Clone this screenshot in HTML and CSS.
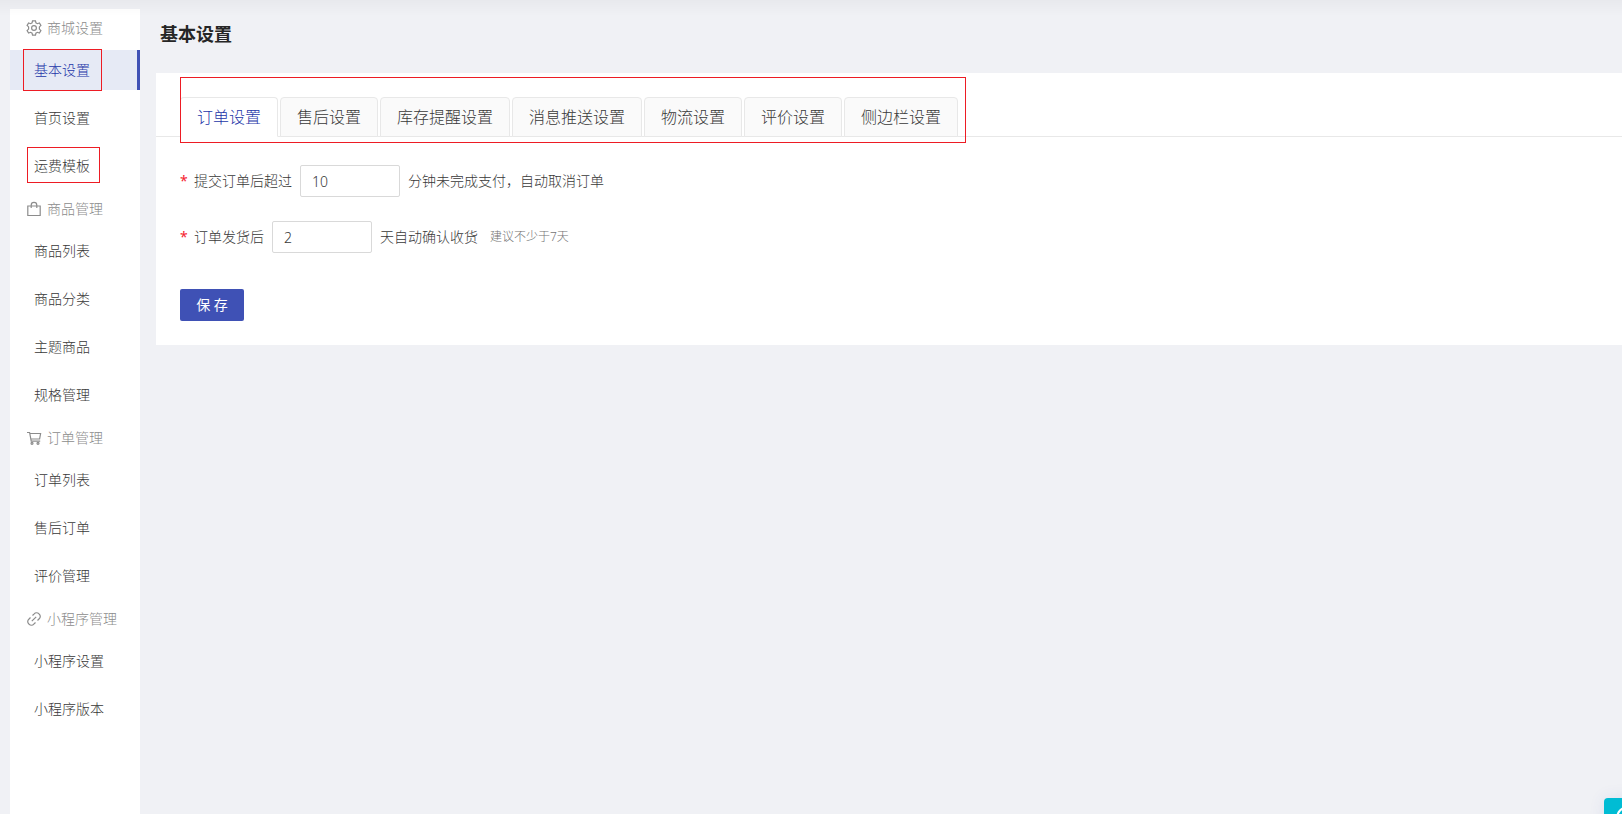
FILE: index.html
```html
<!DOCTYPE html>
<html lang="zh-CN">
<head>
    <meta charset="UTF-8" />
    <title>基本设置</title>
    <link rel="stylesheet" href="styles.css">
</head>
<body>
    <div class="layout">
        <!--左侧菜单-->
        <nav class="sider">
            <h3>
                <svg viewBox="0 0 16 16"><path d="M6.500 .8h3l.4 2 1.500.9 2-.7 1.500 2.500-1.500 1.400v2.200l1.500 1.400-1.500 2.500-2-.7-1.500.9-.4 2h-3l-.4-2-1.500-.9-2 .7-1.500-2.500 1.500-1.400V6.900L1.100 5.500 2.600 3l2 .7 1.500-.9z"/><circle cx="8" cy="8" r="2.400"/></svg>
                商城设置
            </h3>
            <ul>
                <li class="on"><a href="#"><span class="mark mark-basic">基本设置</span></a></li>
                <li><a href="#">首页设置</a></li>
                <li><a href="#"><span class="mark mark-freight">运费模板</span></a></li>
            </ul>
            <h3>
                <svg viewBox="0 0 16 16"><path d="M1.800 5h12.400v9.500H1.800zM5.200 7V4.200a2.800 2.800 0 0 1 5.600 0V7"/></svg>
                商品管理
            </h3>
            <ul>
                <li><a href="#">商品列表</a></li>
                <li><a href="#">商品分类</a></li>
                <li><a href="#">主题商品</a></li>
                <li><a href="#">规格管理</a></li>
            </ul>
            <h3>
                <svg viewBox="0 0 16 16"><path d="M1 2.500h2.600l1.600 8.700h9M4 3.500h10.600l-1 5.500H5"/><circle cx="6" cy="13.300" r="1"/><circle cx="12" cy="13.300" r="1"/></svg>
                订单管理
            </h3>
            <ul>
                <li><a href="#">订单列表</a></li>
                <li><a href="#">售后订单</a></li>
                <li><a href="#">评价管理</a></li>
            </ul>
            <h3>
                <svg viewBox="0 0 16 16"><path d="M6.500 4.500l1.700-1.700a3.100 3.100 0 0 1 4.600-.1l.5.5a3.100 3.100 0 0 1-.1 4.600l-1.700 1.700M9.500 11.500l-1.700 1.700a3.100 3.100 0 0 1-4.600.1l-.5-.5a3.100 3.100 0 0 1 .1-4.600l1.700-1.700M5.800 10.200l4.400-4.400"/></svg>
                小程序管理
            </h3>
            <ul>
                <li><a href="#">小程序设置</a></li>
                <li><a href="#">小程序版本</a></li>
            </ul>
        </nav>

        <!--右侧内容-->
        <main class="content">
            <h1>基本设置</h1>
            <div class="panel">
                <div class="tabs">
                    <button type="button" class="on">订单设置</button>
                    <button type="button">售后设置</button>
                    <button type="button">库存提醒设置</button>
                    <button type="button">消息推送设置</button>
                    <button type="button">物流设置</button>
                    <button type="button">评价设置</button>
                    <button type="button">侧边栏设置</button>
                    <span class="tabs-mark"></span>
                </div>
                <form>
                    <div class="row">
                        <label for="cancel">提交订单后超过</label>
                        <input type="text" id="cancel" value="10">
                        <span>分钟未完成支付，自动取消订单</span>
                    </div>
                    <div class="row">
                        <label for="confirm">订单发货后</label>
                        <input type="text" id="confirm" value="2">
                        <span>天自动确认收货</span>
                        <span class="tip">建议不少于7天</span>
                    </div>
                    <button type="button" class="save">保 存</button>
                </form>
            </div>
        </main>
    </div>
    <button type="button" class="service" aria-label="客服">
        <svg viewBox="0 0 24 24"><circle cx="12" cy="12" r="11"/></svg>
    </button>
</body>
</html>
```

FILE: styles.css
```css
*{
    margin: 0;
    padding: 0;
    box-sizing: border-box;
}
body{
    background-color: #f0f1f5;
    color: #383838;
    font: 300 14px/20px "Noto Sans", "Noto Sans CJK SC", sans-serif;
    overflow: hidden;
}
/*顶部阴影*/
body::before{
    content: "";
    position: fixed;
    z-index: 1;
    top: 0;
    left: 0;
    right: 0;
    height: 16px;
    background: linear-gradient(rgba(0,0,0,.03), rgba(0,0,0,0));
    pointer-events: none;
}
ul{
    list-style: none;
}
a{
    color: inherit;
    text-decoration: none;
}
input, button{
    font: inherit;
    color: inherit;
}
svg{
    fill: none;
    stroke: currentColor;
}
.layout{
    display: flex;
    gap: 16px;
    min-height: 100vh;
    padding: 9px 0 0 10px;
}

/*菜单*/
.sider{
    width: 130px;
    flex-shrink: 0;
    background-color: #fff;
}
.sider h3{
    display: flex;
    align-items: center;
    gap: 5px;
    height: 37px;
    padding-left: 16px;
    color: #8c8c8c;
    font-size: 14px;
    font-weight: 300;
}
.sider h3 svg{
    width: 16px;
    height: 16px;
    color: #8c8c8c;
    stroke-width: 1.2;
}
.sider ul{
    display: flex;
    flex-direction: column;
    gap: 8px;
    padding: 4px 0;
}
.sider li{
    height: 40px;
    padding-left: 24px;
    line-height: 40px;
}
.sider li a{
    display: block;
}
.sider .on{
    color: #2436a8;
    background-color: #e6eaf5;
    border-right: 3px solid #3f51b5;
}
/*红色标注框*/
.mark{
    position: relative;
}
.mark::after{
    content: "";
    position: absolute;
    border: 1px solid #ed1c24;
}
.mark-basic::after{
    inset: -11px -12px -12px -11px;
}
.mark-freight::after{
    inset: -9px -10px -8px -7px;
}

/*内容*/
.content{
    flex: 1;
}
h1{
    height: 64px;
    padding-left: 4px;
    color: #262626;
    font-size: 18px;
    line-height: 50px;
}
.panel{
    padding: 24px 0;
    background-color: #fff;
}
.tabs{
    position: relative;
    display: flex;
    gap: 2px;
    padding-left: 24px;
    border-bottom: 1px solid #e8e8e8;
}
.tabs button{
    height: 40px;
    margin-bottom: -1px;
    padding: 0 16px;
    border: 1px solid #e8e8e8;
    border-radius: 4px 4px 0 0;
    background-color: #fafafa;
    font-size: 16px;
}
.tabs .on{
    color: #2436a8;
    background-color: #fff;
    border-bottom-color: #fff;
}
.tabs-mark{
    position: absolute;
    top: -20px;
    left: 24px;
    width: 786px;
    height: 66px;
    border: 1px solid #ed1c24;
}
form{
    padding: 28px 24px 0;
}
.row{
    display: flex;
    align-items: center;
    gap: 8px;
    margin-bottom: 24px;
}
.row label::before{
    content: "*";
    display: inline-block;
    width: 14px;
    color: #f5222d;
    font-weight: 400;
}
.row input{
    width: 100px;
    height: 32px;
    padding: 0 11px;
    border: 1px solid #d9d9d9;
    border-radius: 2px;
}
.row .tip{
    margin-left: 4px;
    color: #737373;
    font-size: 12px;
}
.save{
    width: 64px;
    height: 32px;
    margin-top: 12px;
    border: 0;
    border-radius: 2px;
    background-color: #3f51b5;
    color: #fff;
    font-weight: 400;
}

/*右下角客服*/
.service{
    display: flex;
    justify-content: center;
    align-items: flex-start;
    position: fixed;
    right: -30px;
    bottom: -32px;
    width: 48px;
    height: 48px;
    padding-top: 8px;
    border: 0;
    border-radius: 4px;
    background-color: #00bcd4;
    color: #fff;
    box-shadow: 0 0 16px rgba(63,81,181,.1);
}
.service svg{
    width: 24px;
    height: 24px;
    stroke-width: 2;
}
```
